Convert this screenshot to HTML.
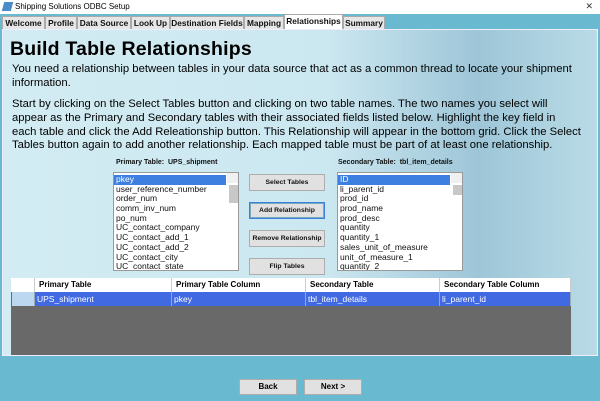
<!DOCTYPE html><html><head><style>
*{margin:0;padding:0;box-sizing:border-box}
body{width:600px;height:401px;position:relative;overflow:hidden;background:#69b9d0;font-family:"Liberation Sans",sans-serif}
.abs{position:absolute}
.tb{top:0;left:0;width:600px;height:14px;background:#fff;font-size:8px;color:#000}
.tabs{top:14px;left:0;width:600px;height:16px;background:#69b9d0}
.tab{position:absolute;top:2px;height:14px;background:#e6e6e6;border:1px solid #aaa;font-size:8.3px;font-weight:bold;line-height:12px;text-align:center;color:#111;white-space:nowrap;overflow:hidden}
.panel{top:29px;left:2px;width:596px;height:327px;background:linear-gradient(90deg,#d3ecf3 0%,#cbe7f0 55%,#9ec6d8 80%,#b9dbe6 100%);border:1px solid #eef}
h1{position:absolute;left:10px;top:38px;font-size:19.5px;font-weight:bold;color:#000;letter-spacing:0.2px}
.p{left:12px;font-size:11.25px;line-height:13.8px;color:#000;white-space:nowrap}
.lb{font-size:7px;font-weight:bold;color:#111;white-space:nowrap}
.list{background:#fff;border:1px solid #999;font-size:8.5px;line-height:9.7px;color:#111;white-space:nowrap;overflow:hidden}
.list div{padding-left:2px;height:9.7px}
.sel{background:#3c7fe0;color:#fff}
.sb{position:absolute;right:0;top:0;width:11px;height:100%;background:#f0f0f0}
.btn{position:absolute;left:249px;width:76px;height:17px;background:#e1e1e1;border:1px solid #adadad;font-size:6.8px;font-weight:bold;text-align:center;line-height:15px;color:#111;white-space:nowrap}
.grid{left:11px;top:278px;width:560px;height:77px;background:#696969}
.gh{position:absolute;top:0;height:14px;background:#fff;font-size:8px;font-weight:bold;line-height:14px;padding-left:4px;border-right:1px solid #ccc;white-space:nowrap}
.gr{position:absolute;top:14px;height:14px;background:#4169e1;color:#fff;font-size:8.5px;line-height:14px;padding-left:2px;border-right:1px solid #9ab}
.nb{position:absolute;top:379px;width:58px;height:16px;background:#e1e1e1;border:1px solid #adadad;font-size:8px;font-weight:bold;text-align:center;line-height:14px}
</style></head><body>
<div class="abs tb"><span style="position:absolute;left:3px;top:2px;width:9px;height:9px;background:#4a8bc8;transform:skewX(-15deg)"></span><span style="position:absolute;left:15px;top:2px">Shipping Solutions ODBC Setup</span><span style="position:absolute;right:7px;top:1px;font-size:9px;color:#333">✕</span></div>
<div class="abs tabs"></div>
<div class="tab" style="left:2px;width:43px;top:16px">Welcome</div>
<div class="tab" style="left:45px;width:32px;top:16px">Profile</div>
<div class="tab" style="left:77px;width:54px;top:16px">Data Source</div>
<div class="tab" style="left:131px;width:39px;top:16px">Look Up</div>
<div class="tab" style="left:170px;width:74px;top:16px">Destination Fields</div>
<div class="tab" style="left:244px;width:40px;top:16px">Mapping</div>
<div class="tab" style="left:284px;width:59px;top:14px;height:16px;background:#fff;border-bottom:none">Relationships</div>
<div class="tab" style="left:343px;width:42px;top:16px">Summary</div>
<div class="abs panel"></div>
<h1>Build Table Relationships</h1>
<div class="abs p" style="top:63px">You need a relationship between tables in your data source that act as a common thread to locate your shipment<br>information.</div>
<div class="abs p" style="top:98px">Start by clicking on the Select Tables button and clicking on two table names. The two names you select will<br>appear as the Primary and Secondary tables with their associated fields listed below. Highlight the key field in<br>each table and click the Add Releationship button. This Relationship will appear in the bottom grid. Click the Select<br>Tables button again to add another relationship. Each mapped table must be part of at least one relationship.</div>
<div class="abs lb" style="left:116px;top:159px">Primary Table:&nbsp; UPS_shipment</div>
<div class="abs lb" style="left:338px;top:159px">Secondary Table:&nbsp; tbl_item_details</div>
<div class="abs list" style="left:113px;top:172px;width:126px;height:99px;padding-top:2px"><div class="sel" style="margin-right:12px">pkey</div><div>user_reference_number</div><div>order_num</div><div>comm_inv_num</div><div>po_num</div><div>UC_contact_company</div><div>UC_contact_add_1</div><div>UC_contact_add_2</div><div>UC_contact_city</div><div>UC_contact_state</div><div class="sb"><div style="background:#c8c8c8;margin-top:12px;height:18px;width:11px;padding:0"></div></div></div>
<div class="abs list" style="left:337px;top:172px;width:126px;height:99px;padding-top:2px"><div class="sel" style="margin-right:12px">ID</div><div>li_parent_id</div><div>prod_id</div><div>prod_name</div><div>prod_desc</div><div>quantity</div><div>quantity_1</div><div>sales_unit_of_measure</div><div>unit_of_measure_1</div><div>quantity_2</div><div class="sb"><div style="background:#c8c8c8;margin-top:12px;height:10px;width:11px;padding:0"></div></div></div>
<div class="btn" style="top:174px">Select Tables</div>
<div class="btn" style="top:202px;border:1px solid #3c7fe0;box-shadow:inset 0 0 0 1px #7ab">Add Relationship</div>
<div class="btn" style="top:230px">Remove Relationship</div>
<div class="btn" style="top:258px">Flip Tables</div>
<div class="abs grid">
<div class="gh" style="left:0;width:24px;padding:0"></div>
<div class="gh" style="left:24px;width:137px">Primary Table</div>
<div class="gh" style="left:161px;width:134px">Primary Table Column</div>
<div class="gh" style="left:295px;width:134px">Secondary Table</div>
<div class="gh" style="left:429px;width:131px">Secondary Table Column</div>
<div class="gr" style="left:1px;width:23px;background:#bcd8f0"></div>
<div class="gr" style="left:24px;width:137px">UPS_shipment</div>
<div class="gr" style="left:161px;width:134px">pkey</div>
<div class="gr" style="left:295px;width:134px">tbl_item_details</div>
<div class="gr" style="left:429px;width:131px">li_parent_id</div>
</div>
<div class="nb" style="left:239px">Back</div>
<div class="nb" style="left:304px">Next &gt;</div>
</body></html>
